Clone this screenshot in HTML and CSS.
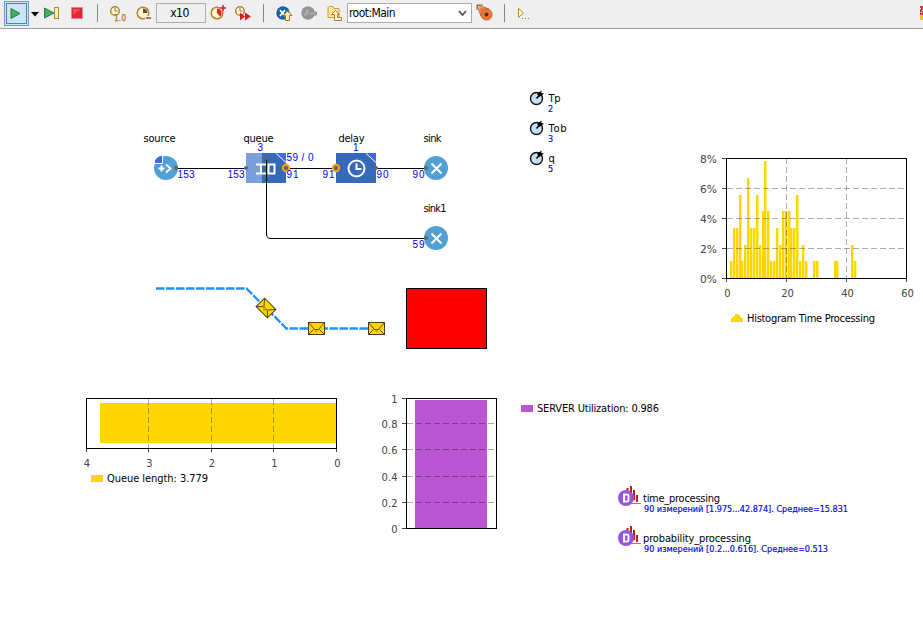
FILE: index.html
```html
<!DOCTYPE html>
<html lang="ru">
<head>
<meta charset="utf-8">
<title>root:Main</title>
<link rel="stylesheet" href="styles.css">
</head>
<body>
<div class="toolbar">
  <button class="tool run"><svg width="21" height="21"><rect class="focus" x=".5" y=".5" width="20" height="20"/><path d="M5 5.500 14 10.500 5 15.500z" fill="#45ad62" stroke="#267d43"/></svg></button>
  <svg class="caret" width="8" height="5"><path d="M0 0h8L4 4.500z"/></svg>
  <svg class="step" width="16" height="14"><path d="M.5 2v10L10 7z" fill="#45ad62" stroke="#267d43"/><rect x="10.500" y="1.500" width="4" height="11" fill="#fff0a0" stroke="#ad8735"/></svg>
  <svg class="stop" width="12" height="12"><rect x=".5" y=".5" width="11" height="11" fill="#de2638" stroke="#d09090"/><path d="M2 2h8L2 8z" fill="#ea4f5c"/></svg>
  <i class="sep"></i>
  <svg class="i-real" width="18" height="18"><circle cx="6" cy="6" r="4.300" fill="#fff9df" stroke="#b98432" stroke-width="1.500"/><path d="M6 3v3h2.500" fill="none" stroke="#976a27"/><text x="5" y="16" class="speed" textLength="12">1.0</text></svg>
  <svg class="i-slow" width="16" height="16"><circle cx="7" cy="7" r="5.800" fill="#fff6d0" stroke="#b98432" stroke-width="1.500"/><path d="M7 7V2.500A4.500 4.500 0 0 1 11.500 7z" fill="#6b4935"/><path d="M9 12h6" stroke="#efefef" stroke-width="4"/><path d="M10 12h5" stroke="#8d511d" stroke-width="1.500"/></svg>
  <div class="speedbox">x10</div>
  <svg class="i-fast" width="17" height="17"><circle cx="7" cy="9" r="5.800" fill="#fff6d0" stroke="#b98432" stroke-width="1.500"/><path d="M7 9V4.500A4.500 4.500 0 0 1 10 12.400z" fill="#e61e20"/><path d="M10 4h6M13 1v6" stroke="#efefef" stroke-width="3"/><path d="M10 4h6M13 1v6" stroke="#d81c20" stroke-width="1.500"/></svg>
  <svg class="i-virt" width="18" height="17"><circle cx="6" cy="6" r="4.300" fill="#fff9df" stroke="#b98432" stroke-width="1.500"/><path d="M6 3v3h2.500" fill="none" stroke="#976a27"/><path d="M6 7.500v8l5-4zM11 7.500v8l6-4z" fill="#d51c20"/></svg>
  <i class="sep sep2"></i>
  <svg class="i-x" width="17" height="17"><circle cx="7" cy="7" r="6.700" fill="#1762ad"/><path d="M4 4l5 6M9 4l-5 6" stroke="#fff" stroke-width="1.800"/><path d="M11.500 5 16 9.500h-2.500v5h-4v-5H7z" fill="#fff1b6" stroke="#ad741f"/></svg>
  <svg class="i-a" width="17" height="15"><circle cx="7" cy="7" r="6.700" fill="#959595"/><path d="M3.500 10 6.500 4l3 6M5 8h3.500" fill="none" stroke="#bbb" stroke-width="1.200"/><path d="M7.500 7.500 11.500 4v2h4v3h-4v2z" fill="#a8a8a8" stroke="#8c8c8c"/></svg>
  <svg class="i-up" width="16" height="16"><path d="M1 12.500V2.500l1-1h4l1 2h5v9z" fill="#ffe49b" stroke="#cf9b40"/><path d="M8.500 5.500l4 4h-2v3h4v3h-7v-6h-3z" fill="#fff7d5" stroke="#ba7c23"/></svg>
  <div class="combo"><span>root:Main</span><svg width="9" height="7"><path d="M1 1l3.500 4L8 1" fill="none" stroke="#505050" stroke-width="1.800"/></svg></div>
  <svg class="i-nav" width="18" height="18"><path d="M3 3 13 5l3 5-6 5-5-4z" fill="#f27e35"/><path d="M1 6V1h6M1 1l12 4M1 1l4 11" fill="none" stroke="#9c633d"/><circle cx="10.500" cy="10.500" r="5.500" fill="#f17b32" stroke="#c0602a"/><circle cx="10.500" cy="10.500" r="2" fill="#502a1b"/></svg>
  <i class="sep sep3"></i>
  <svg class="i-more" width="12" height="13"><path d="M1.500 1.500v9L6.500 6z" fill="#fff9dc" stroke="#bd842d"/><path d="M5 11.500h1M8 11.500h1M11 11.500h1" stroke="#a27638"/></svg>
  <svg class="edge" width="3" height="16"><path d="M0 1h3v9H0z" fill="#d53845"/><path d="M0 3.500h1M2 5.500h1M1 7.500h1" stroke="#fff"/><path d="M0 10h3v5H0z" fill="#f0c11b"/></svg>
</div>

<svg class="model" width="923" height="594" viewBox="0 29 923 594">
  <defs>
    <g id="sink"><circle r="12" fill="#509fd5"/><path d="M-4.500-4.500l10 10M5.500-4.500l-10 10" stroke="#fff" stroke-width="2"/><circle cx="-10" r="2" class="port"/></g>
    <g id="param"><circle r="6" fill="#c7dff2" stroke="#111" stroke-width="1.400"/><path d="M0 0 3-3.500" stroke="#000" stroke-width="1.500"/><path d="M.5-4.500 5-8l-.2 2.500L7.500-5 3-1.500z"/></g>
    <g id="mail"><rect x="-8" y="-6" width="16" height="12" fill="#ffd700" stroke="#4d4018"/><path d="M-2 2h4L0 4z" fill="#b89a10"/><path d="M-8-6-2 1h4l6-7M-8 6l5-5M8 6 3 1" fill="none" stroke="#4d4018" stroke-width=".9"/></g>
    <g id="data"><path d="M1.500-8v10M5-10v13M8-6v10M11-1v7" class="spikes"/><path d="M6 7.500h9" stroke="#888"/><circle cy="2" r="8" fill="#9654e5"/><path d="M-2-1.500v7H1q1.500 0 1.500-1.500V0q0-1.500-1.500-1.500z" fill="none" stroke="#fff" stroke-width="2"/></g>
    <clipPath id="source-edge"><circle cx="166" cy="168" r="13.500"/></clipPath>
  </defs>

  <g class="wire"><path d="M176 168.500h70M286 168.500h50M376 168.500h50M266.500 158v76q0 4.500 4.500 4.500h156"/></g>
  <circle cx="166" cy="168" r="12" fill="#509fd5"/><g clip-path="url(#source-edge)"><path d="M154 155h9v9h-9z" fill="#fff"/><path d="M155 156h7v7h-7z" fill="#4169e1"/></g><path d="M158.500 168.500h6M161.500 165.500v6M166 164.500l4.500 4-4.500 4" class="glyph"/><circle cx="176" cy="168" r="2" class="port"/>

  <path d="M246 153h16v30h-16z" fill="#7b9fda"/><path d="M262 153h24v30h-24z" fill="#356abb"/><path d="M276 153h10v10z" fill="#4169e1"/><path d="M276 153.500l10 9" stroke="#fff"/>
  <path d="M256 164.500h10M256 173.500h10M261 164.500v9M268.500 164.500h6v9h-6z" class="glyph"/>
  <path d="M266.500 158v26" stroke="#000"/><circle cx="266" cy="158" r="2" class="port"/><circle cx="246" cy="168" r="2" class="port"/><circle cx="286" cy="168" r="3.200" class="hot"/>

  <path d="M336 153h40v30h-40z" fill="#356abb"/><path d="M366 153h10v10z" fill="#4169e1"/><path d="M366 153.500l10 9" stroke="#fff"/>
  <circle cx="356.500" cy="168.500" r="8" class="glyph"/><path d="M356.500 163.500v5.500h5" class="glyph"/><circle cx="336" cy="168" r="3.200" class="hot"/><circle cx="376" cy="168" r="2" class="port"/>
  <use href="#sink" x="436" y="168"/><use href="#sink" x="436" y="238"/>

  <g class="name">
    <text x="143.500" y="142" textLength="32">source</text><text x="243.500" y="142" textLength="30">queue</text><text x="338.500" y="142" textLength="26">delay</text><text x="423.500" y="142" textLength="18">sink</text><text x="423.500" y="212" textLength="23">sink1</text>
    <text x="548.500" y="102" textLength="12">Tp</text><text x="548.500" y="132" textLength="18">Tob</text><text x="548.500" y="162">q</text>
    <text x="643" y="502" textLength="77">time_processing</text><text x="643" y="542" textLength="108">probability_processing</text>
    <text x="747" y="322" textLength="128">Histogram Time Processing</text><text x="107" y="482" textLength="101">Queue length: 3.779</text><text x="537" y="412" textLength="122">SERVER Utilization: 0.986</text>
  </g>
  <g class="count">
    <text x="177.500" y="178" textLength="17">153</text><text x="227.500" y="178" textLength="17">153</text><text x="257.500" y="151">3</text><text x="286.500" y="161" textLength="27">59 / 0</text><text x="286.500" y="178" textLength="12">91</text><text x="322.500" y="178" textLength="12">91</text><text x="353" y="151">1</text><text x="376.500" y="178" textLength="12">90</text><text x="412.500" y="178" textLength="12">90</text><text x="412.500" y="248" textLength="12">59</text>
  </g>
  <g class="value">
    <text x="548" y="112">2</text><text x="548" y="142">3</text><text x="548" y="172">5</text>
    <text x="644" y="512" textLength="204">90 измерений [1.975...42.874]. Среднее=15.831</text><text x="644" y="552" textLength="184">90 измерений [0.2...0.616]. Среднее=0.513</text>
  </g>
  <use href="#param" x="536.500" y="98.500"/><use href="#param" x="536.500" y="128.500"/><use href="#param" x="536.500" y="158.500"/>

  <path d="M156 288.500h90.500l40 40H384" class="conveyor"/>
  <use href="#mail" transform="translate(266 308) rotate(45)"/><use href="#mail" x="316.500" y="328.500"/><use href="#mail" x="376.500" y="328.500"/>
  <rect x="406.500" y="288.500" width="80" height="60" fill="red" stroke="#000"/>

  <!-- processing time histogram -->
  <path id="bars" class="bars" d="M731 278v-17M734 278v-50M737 278v-50M740 278v-83M742 278v-17M745 278v-33M748 278v-100M751 278v-50M754 278v-50M757 278v-83M760 278v-33M763 278v-67M765 278v-117M768 278v-67M771 278v-17M774 278v-17M777 278v-50M780 278v-33M783 278v-67M786 278v-67M789 278v-67M791 278v-50M794 278v-50M797 278v-83M800 278v-17M803 278v-33M806 278v-17M814 278v-17M817 278v-17M835 278v-17M837 278v-17M852 278v-33M855 278v-17"/>
  <use href="#bars" x="1" class="fringe"/>
  <path class="grid" d="M727 188.500h179M727 218.500h179M727 248.500h179M786.500 158v120M846.500 158v120"/>
  <rect x="726.500" y="158.500" width="180" height="120" class="frame"/>
  <path class="tick" d="M722 158.500h4M722 188.500h4M722 218.500h4M722 248.500h4M722 278.500h4M726.500 279v3M786.500 279v3M846.500 279v3M906.500 279v3"/>
  <g class="axis end"><text x="717" y="163" textLength="17" lengthAdjust="spacingAndGlyphs">8%</text><text x="717" y="193" textLength="17" lengthAdjust="spacingAndGlyphs">6%</text><text x="717" y="223" textLength="17" lengthAdjust="spacingAndGlyphs">4%</text><text x="717" y="253" textLength="17" lengthAdjust="spacingAndGlyphs">2%</text><text x="717" y="283" textLength="17" lengthAdjust="spacingAndGlyphs">0%</text></g>
  <g class="axis mid"><text x="727.500" y="297">0</text><text x="787.500" y="297">20</text><text x="847.500" y="297">40</text><text x="907.500" y="297">60</text></g>
  <path d="M731 322v-4h2v-2h2v-2h3v1h2v2h1v1h2v4z" fill="gold"/>

  <!-- queue length -->
  <rect x="100" y="403" width="236" height="40" fill="gold"/>
  <path class="grid" d="M148.500 399v49M211.500 399v49M273.500 399v49"/>
  <rect x="86.500" y="398.500" width="250" height="50" class="frame"/>
  <path class="tick" d="M86.500 449v3M148.500 449v3M211.500 449v3M273.500 449v3M336.500 449v3"/>
  <g class="axis mid"><text x="87" y="467">4</text><text x="149.500" y="467">3</text><text x="212" y="467">2</text><text x="274.500" y="467">1</text><text x="337.500" y="467">0</text></g>
  <path d="M91 475h12v7H91z" fill="gold"/>

  <!-- server utilization -->
  <rect x="415" y="400" width="72" height="128" fill="#ba55d3"/>
  <path class="grid" d="M407 423.500h88M407 449.500h88M407 476.500h88M407 502.500h88"/>
  <rect x="406.500" y="398.500" width="90" height="130" class="frame"/>
  <path class="tick" d="M402 398.500h4M402 423.500h4M402 449.500h4M402 476.500h4M402 502.500h4M402 528.500h4"/>
  <g class="axis end"><text x="397.500" y="403">1</text><text x="397.500" y="428" textLength="16">0.8</text><text x="397.500" y="454" textLength="16">0.6</text><text x="397.500" y="481" textLength="16">0.4</text><text x="397.500" y="507" textLength="16">0.2</text><text x="397.500" y="533">0</text></g>
  <path d="M521 405h12v7h-12z" fill="#ba55d3"/>

  <use href="#data" x="626" y="496"/><use href="#data" x="626" y="536"/>
</svg>
</body>
</html>
```
FILE: styles.css
```css
body { margin: 0; width: 923px; height: 623px; overflow: hidden; background: #fff; font: 11px "DejaVu Sans Condensed", "DejaVu Sans", sans-serif; font-stretch: condensed; }
.toolbar { display: flex; align-items: flex-start; box-sizing: border-box; height: 29px; background: #efefef; border-bottom: 1px solid #a0a0a0; }
.toolbar > * { flex: none; }
.tool { box-sizing: border-box; padding: 0; }
.run { display: flex; align-items: center; justify-content: center; width: 25px; height: 25px; margin: 1px 2px 0 4px; border: 1px solid #5ba1e1; background: #cce4f7; }
.focus { fill: none; stroke: #111; stroke-dasharray: 1 1; }
.caret { margin: 12px 5px 0 0; }
.step { margin: 6px 11px 0 0; }
.stop { margin: 7px 14px 0 0; }
.sep { width: 1px; height: 18px; margin-top: 4px; background: #858585; }
.i-real { margin: 5px 8px 0 11px; }
.speed { fill: #a9781f; stroke: #a9781f; stroke-width: .25; font-size: 8px; }
.i-slow { margin: 6px 4px 0 1px; }
.speedbox { box-sizing: border-box; width: 50px; height: 20px; margin-top: 3px; border: 1px solid #abadb3; text-align: center; text-indent: -3px; font-size: 12px; letter-spacing: -.5px; line-height: 19px; }
.i-fast { margin: 4px 7px 0 4px; }
.i-virt { margin: 5px 0 0 0; }
.sep2 { margin-left: 11px; }
.i-x { margin: 6px 8px 0 12px; }
.i-a { margin: 6px 8px 0 0; }
.i-up { margin: 5px 4px 0 1px; }
.combo { display: flex; align-items: center; justify-content: space-between; box-sizing: border-box; width: 125px; height: 20px; margin-top: 3px; padding: 0 4px 0 1px; border: 1px solid #abadb3; background: #fff; font-size: 12px; letter-spacing: -.55px; }
.i-nav { margin: 4px 10px 0 4px; }
.i-more { margin: 7px 0 0 12px; }
.edge { margin: 5px 0 0 auto; }
.model { display: block; }
.model text { font-family: "DejaVu Sans Condensed", "DejaVu Sans", sans-serif; font-size: 11px; }
.model .count text { font-family: "Liberation Sans", Arial, sans-serif; font-size: 10px; fill: #0000f0; }
.model .value text { font-size: 9px; fill: #0000f0; stroke: #0000f0; stroke-width: .15; }
.wire path { fill: none; stroke: #000; }
.glyph { fill: none; stroke: #fff; stroke-width: 2; }
.port { fill: #666; }
.hot { fill: #666; stroke: #ffa500; stroke-width: 2; }
.conveyor { fill: none; stroke: #1e90ff; stroke-width: 2.3; stroke-dasharray: 8.500 1.500; }
.bars { fill: none; stroke: gold; stroke-width: 2; }
.fringe { opacity: .45; }
.grid { fill: none; stroke: #000; stroke-opacity: .32; stroke-dasharray: 6 3; }
.frame { fill: none; stroke: #000; }
.tick { stroke: #444; }
.axis { fill: #444; }
.end { text-anchor: end; }
.mid { text-anchor: middle; }
.spikes { stroke: #c61a0e; stroke-width: 2; }
```
